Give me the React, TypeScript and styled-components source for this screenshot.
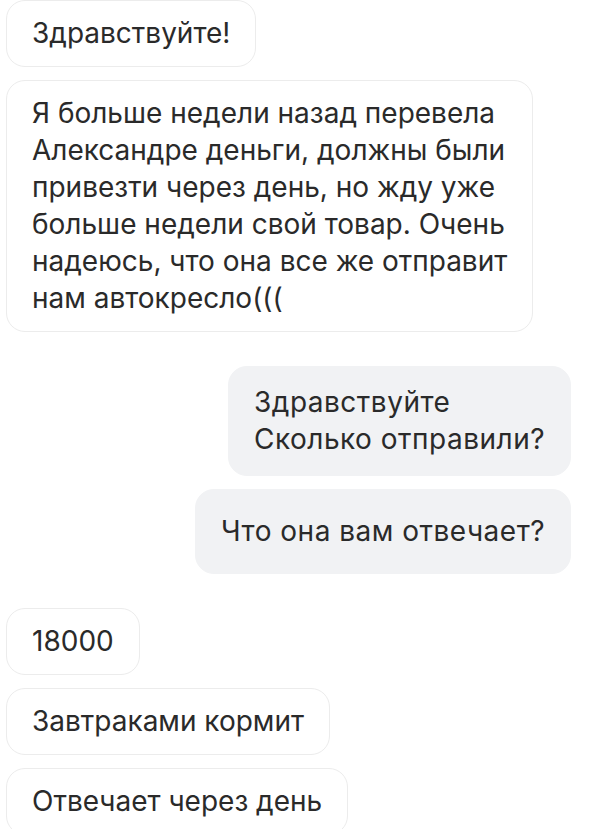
import { styled, createGlobalStyle } from "styled-components";

const GlobalStyle = createGlobalStyle`
  html, body {
    margin: 0;
    padding: 0;
    background: #ffffff;
  }
  body {
    font-family: Inter, "Noto Sans", sans-serif;
    -webkit-font-smoothing: antialiased;
  }
`;

const Screen = styled.div`
  width: 600px;
  height: 829px;
  overflow: hidden;
  display: flex;
  flex-direction: column;
  gap: 34px;
  box-sizing: border-box;
`;

const Group = styled.div<{ $side: "in" | "out" }>`
  display: flex;
  flex-direction: column;
  align-items: ${(p) => (p.$side === "in" ? "flex-start" : "flex-end")};
  gap: 13px;
  padding: ${(p) => (p.$side === "in" ? "0 0 0 6px" : "0 29px 0 0")};
`;

const Bubble = styled.div<{ $side: "in" | "out"; $pad?: number }>`
  box-sizing: border-box;
  max-width: 540px;
  padding: ${(p) => p.$pad ?? 14}px 25px;
  border-radius: 19px;
  font-size: 28px;
  line-height: 37px;
  letter-spacing: ${(p) => (p.$side === "in" ? "0" : "0.5px")};
  color: #2a2a2a;
  white-space: pre-line;
  background: ${(p) => (p.$side === "in" ? "#ffffff" : "#f1f2f4")};
  border: 1px solid ${(p) => (p.$side === "in" ? "#ececec" : "#f1f2f4")};
`;

const longText =
  "Я больше недели назад перевела\nАлександре деньги, должны были\nпривезти через день, но жду уже\nбольше недели свой товар. Очень\nнадеюсь, что она все же отправит\nнам автокресло(((";

export default function App() {
  return (
    <>
      <GlobalStyle />
      <Screen>
        <Group $side="in">
          <Bubble $side="in">Здравствуйте!</Bubble>
          <Bubble $side="in">{longText}</Bubble>
        </Group>
        <Group $side="out">
          <Bubble $side="out" $pad={17}>
            {"Здравствуйте\nСколько отправили?"}
          </Bubble>
          <Bubble $side="out" $pad={23}>
            Что она вам отвечает?
          </Bubble>
        </Group>
        <Group $side="in">
          <Bubble $side="in">18000</Bubble>
          <Bubble $side="in">Завтраками кормит</Bubble>
          <Bubble $side="in">Отвечает через день</Bubble>
        </Group>
      </Screen>
    </>
  );
}
